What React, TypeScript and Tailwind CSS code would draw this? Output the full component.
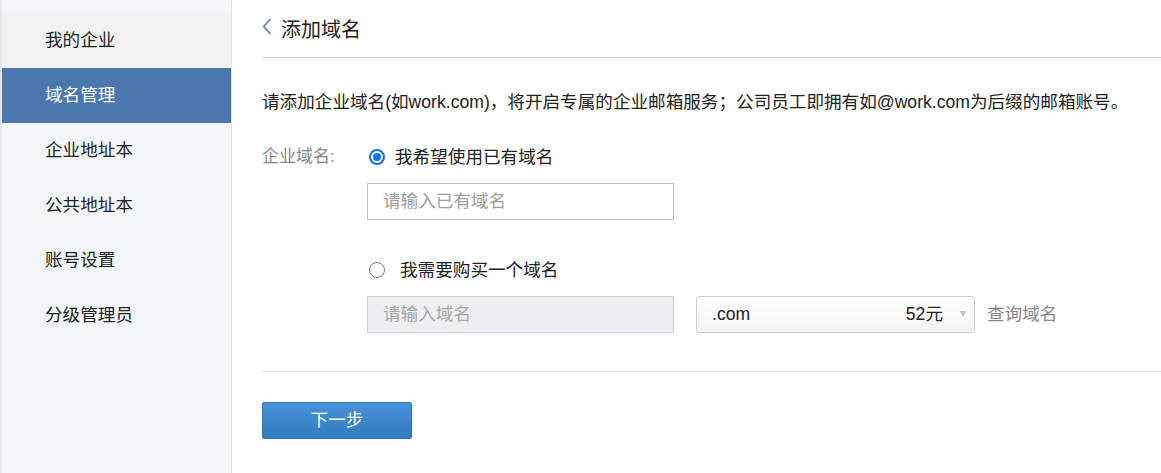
import { useState } from "react";

const menu = ["我的企业", "域名管理", "企业地址本", "公共地址本", "账号设置", "分级管理员"];

function Radio({ checked }: { checked: boolean }) {
  if (checked) {
    return (
      <span className="flex h-[16px] w-[16px] items-center justify-center rounded-full border-2 border-[#0b73f0] bg-white">
        <span className="h-[8px] w-[8px] rounded-full bg-[#0b73f0]" />
      </span>
    );
  }
  return <span className="h-[16px] w-[16px] rounded-full border border-[#7a7a7a] bg-white" />;
}

export default function App() {
  const [mode, setMode] = useState<"own" | "buy">("own");

  return (
    <div className="flex h-[473px] w-[1161px] overflow-hidden bg-white font-['Liberation_Sans','Noto_Sans_CJK_SC',sans-serif] text-[#222]">
      <aside className="w-[232px] shrink-0 border-l-2 border-r border-l-[#e6e9ed] border-r-[#dfe3e7] bg-[#f3f6f9] pt-[13px]">
        {menu.map((item, i) => (
          <div
            key={item}
            className={`flex h-[55px] items-center pl-[43px] text-[17.6px] ${
              i === 1 ? "bg-[#4a77ad] text-white" : i === 0 ? "bg-[#f2f2f2]" : ""
            }`}
          >
            {item}
          </div>
        ))}
      </aside>

      <main className="flex-1 pl-[30px]">
        <div className="flex h-[58px] items-center gap-[9px] border-b border-[#d6d6d6] pt-[3px]">
          <svg width="10" height="17" viewBox="0 0 10 17" fill="none" className="-mt-[7px]">
            <path d="M8.5 1 L1.8 8.5 L8.5 16" stroke="#6a84b6" strokeWidth="1.8" />
          </svg>
          <span className="text-[20px]">添加域名</span>
        </div>

        <p className="mt-[32px] text-[17.6px] leading-[24px] text-[#222]">
          请添加企业域名(如work.com)，将开启专属的企业邮箱服务；公司员工即拥有如@work.com为后缀的邮箱账号。
        </p>

        <div className="mt-[31px] flex h-[24px] items-center">
          <span className="w-[107px] text-[17px] text-[#888]">企业域名:</span>
          <button className="flex items-center gap-[10px]" onClick={() => setMode("own")}>
            <Radio checked={mode === "own"} />
            <span className="text-[17.6px]">我希望使用已有域名</span>
          </button>
        </div>

        <input
          className="ml-[105px] mt-[14px] h-[37px] w-[307px] border border-[#b9c1ca] bg-white px-[15px] text-[17.6px] outline-none placeholder:text-[#9d9d9d]"
          placeholder="请输入已有域名"
        />

        <div className="mt-[38px] flex h-[24px] items-center pl-[107px]">
          <button className="flex items-center gap-[15px]" onClick={() => setMode("buy")}>
            <Radio checked={mode === "buy"} />
            <span className="text-[17.6px]">我需要购买一个域名</span>
          </button>
        </div>

        <div className="mt-[14px] flex items-center pl-[105px]">
          <input
            disabled
            className="h-[37px] w-[307px] border border-[#cdd1d6] bg-[#eeeef0] px-[15px] text-[17.6px] placeholder:text-[#a6a6a6]"
            placeholder="请输入域名"
          />
          <div className="ml-[22px] flex h-[37px] w-[279px] items-center justify-between rounded-[3px] border border-[#d0d0d0] bg-gradient-to-b from-white to-[#f4f4f4] pl-[15px] pr-[8px] text-[17.6px] text-[#222]">
            <span>.com</span>
            <span className="flex items-center gap-[17px]">
              <span>52元</span>
              <span className="h-0 w-0 border-x-[3px] border-t-[6px] border-x-transparent border-t-[#bcbcbc]" />
            </span>
          </div>
          <span className="ml-[12px] text-[17.6px] text-[#888]">查询域名</span>
        </div>

        <div className="mt-[38px] border-t border-[#dedede]" />

        <button className="mt-[30px] h-[37px] w-[150px] rounded-[2px] border border-[#2e78b9] bg-gradient-to-b from-[#4794da] to-[#2f7bbf] text-[17.6px] text-white">
          下一步
        </button>
      </main>
    </div>
  );
}
